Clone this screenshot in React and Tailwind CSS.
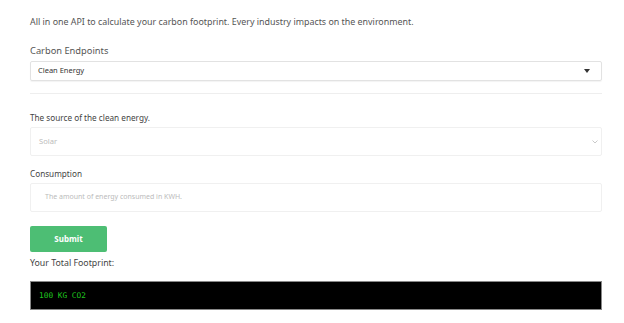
export default function App() {
  return (
    <div className="w-[624px] h-[323px] bg-white overflow-hidden" style={{ fontFamily: '"Noto Sans", "Open Sans", sans-serif' }}>
      <div className="pl-[30px] pr-[22px] pt-[16px]">
        <p className="text-[8.9px] leading-[12px] text-[#555] whitespace-nowrap">All in one API to calculate your carbon footprint. Every industry impacts on the environment.</p>
        <div className="mt-[16px] text-[9.3px] leading-[14px] text-[#555]">Carbon Endpoints</div>
        <div className="mt-[3px] h-[20px] border border-[#e2e2e2] rounded-[2px] shadow-[0_1px_1px_rgba(0,0,0,0.05)] flex items-center justify-between pl-[7px] pr-[11px]">
          <span className="text-[7.5px] text-[#333]">Clean Energy</span>
          <span className="w-0 h-0 border-l-[3px] border-r-[3px] border-t-[4px] border-l-transparent border-r-transparent border-t-[#333]"></span>
        </div>
        <div className="mt-[12px] h-px bg-[#eee]"></div>
        <div className="mt-[18px] text-[8.2px] leading-[12px] text-[#444]">The source of the clean energy.</div>
        <div className="mt-[3px] h-[29px] border border-[#f0f0f0] rounded-[2px] flex items-center justify-between pl-[8px] pr-[3px]">
          <span className="text-[7.6px] text-[#bbb]">Solar</span>
          <svg width="6" height="4" viewBox="0 0 6 4"><path d="M0.5 0.5 L3 3 L5.5 0.5" fill="none" stroke="#bbb" strokeWidth="0.8" /></svg>
        </div>
        <div className="mt-[12px] text-[8.2px] leading-[12px] text-[#444]">Consumption</div>
        <div className="mt-[3px] h-[29px] border border-[#f0f0f0] rounded-[2px] flex items-center pl-[14px]">
          <span className="text-[7px] text-[#bbb]">The amount of energy consumed in KWH.</span>
        </div>
        <button className="mt-[14px] w-[77px] h-[26px] rounded-[2px] bg-[#4dbe74] text-white text-[8px] font-bold flex items-center justify-center">Submit</button>
        <div className="mt-[5px] text-[8.8px] leading-[12px] text-[#444]">Your Total Footprint:</div>
        <div className="mt-[12px] h-[29px] bg-black border border-[#888] flex items-center pl-[8px]">
          <span className="text-[7.8px] text-[#1fc31f]" style={{ fontFamily: '"DejaVu Sans Mono", monospace' }}>100 KG CO2</span>
        </div>
      </div>
    </div>
  );
}
